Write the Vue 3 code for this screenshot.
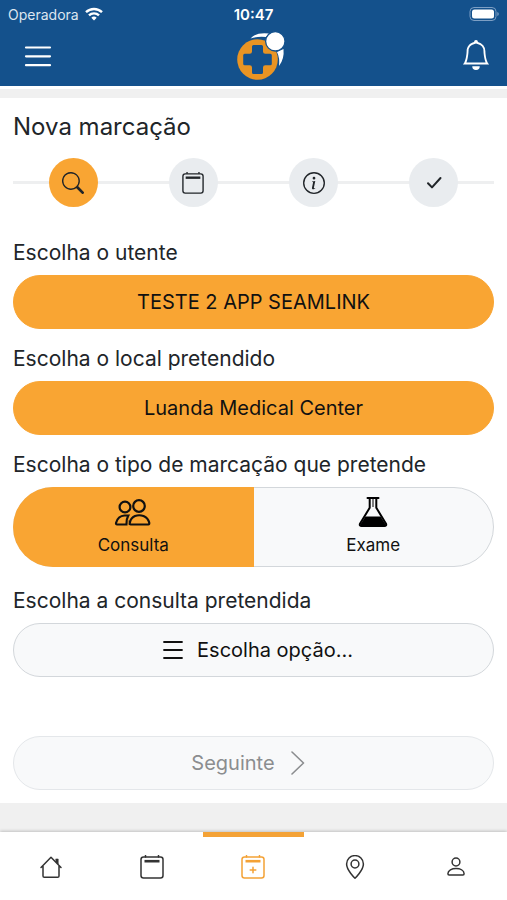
<script setup>
import { ref } from 'vue';

const steps = ['search', 'calendar', 'info', 'check'];
const currentStep = ref('search');

const tabs = [
  { name: 'home', label: 'Início' },
  { name: 'calendar', label: 'Agenda' },
  { name: 'calendar-plus', label: 'Nova marcação' },
  { name: 'pin', label: 'Locais' },
  { name: 'person', label: 'Perfil' }
];
const activeTab = ref('calendar-plus');

const tipo = ref('consulta');
</script>

<template>
  <div class="app">
    <header class="header">
      <div class="status">
        <span class="carrier">
          Operadora
          <svg width="18" height="14" viewBox="0 0 18 14" fill="none" stroke="#fff" stroke-width="2.4">
            <path d="M1 5.2a11.5 11.5 0 0 1 16 0" />
            <path d="M4 8.4a7.2 7.2 0 0 1 10 0" />
            <path d="M9 13.6l-2.7-2.8a3.9 3.9 0 0 1 5.4 0z" fill="#fff" stroke="none" />
          </svg>
        </span>
        <span class="time">10:47</span>
        <svg class="battery" width="30" height="14" viewBox="0 0 30 14">
          <rect x="1" y="0.5" width="26" height="13" rx="4" fill="none" stroke="#7d9fc4" />
          <rect x="3" y="2.5" width="22" height="9" rx="2.5" fill="#fff" />
          <path d="M28.3 5v4q1.5-.6 1.5-2t-1.5-2z" fill="#7d9fc4" />
        </svg>
      </div>
      <div class="toolbar">
        <button class="icon-button menu" aria-label="Menu">
          <svg width="28" height="24" viewBox="0 0 28 24" stroke="#fff" stroke-width="2.2" stroke-linecap="round">
            <path d="M2 2.5h24M2 11.3h24M2 20.2h24" />
          </svg>
        </button>
        <svg class="logo" width="66" height="52" viewBox="-14 0 66 52">
          <path d="M15.5 7.5Q21 1 34 2.5L31 6Q23 5 15.5 7.5z" fill="#fff" />
          <path d="M48.5 18Q49.5 28 44 35Q45 27 42 21z" fill="#fff" />
          <circle cx="22.5" cy="28.5" r="20.3" fill="#e99423" />
          <path d="M18.5 14h8q1.5 0 1.5 1.5v5q0 2.3 2.3 2.3h5q1.5 0 1.500 1.500v8.400q0 1.500-1.500 1.500h-5q-2.300 0-2.300 2.300v5q0 1.500-1.500 1.500h-8q-1.500 0-1.500-1.500v-5q0-2.300-2.300-2.300h-5q-1.500 0-1.500-1.500v-8.400q0-1.500 1.500-1.500h5q2.300 0 2.300-2.300v-5q0-1.500 1.500-1.500z" fill="#14518c" />
          <circle cx="40.3" cy="10.3" r="9.7" fill="#fff" stroke="#14518c" stroke-width="1.3" />
        </svg>
        <button class="icon-button bell" aria-label="Notificações">
          <svg width="30" height="30" viewBox="0 0 16 16" fill="#fff">
            <path d="M8 16a2 2 0 0 0 2-2H6a2 2 0 0 0 2 2zM8 1.918l-.797.161A4.002 4.002 0 0 0 4 6c0 .628-.134 2.197-.459 3.742-.16.767-.376 1.566-.663 2.258h10.244c-.287-.692-.502-1.49-.663-2.258C12.134 8.197 12 6.628 12 6a4.002 4.002 0 0 0-3.203-3.92L8 1.917zM14.22 12c.223.447.481.801.78 1H1c.299-.199.557-.553.78-1C2.68 10.2 3 6.88 3 6c0-2.42 1.72-4.44 4.005-4.901a1 1 0 1 1 1.99 0A5.002 5.002 0 0 1 13 6c0 .88.32 4.2 1.22 6z" />
          </svg>
        </button>
      </div>
    </header>

    <main class="card">
      <h1>Nova marcação</h1>

      <ol class="steps">
        <li v-for="step in steps" :key="step">
          <span class="step" :class="{ active: step === currentStep }">
            <svg v-if="step === 'search'" width="22" height="22" viewBox="0 0 16 16" fill="currentColor">
              <path d="M11.742 10.344a6.5 6.5 0 1 0-1.397 1.398h-.001c.03.04.062.078.098.115l3.85 3.85a1 1 0 0 0 1.415-1.414l-3.85-3.85a1.007 1.007 0 0 0-.115-.1zM12 6.5a5.5 5.5 0 1 1-11 0 5.5 5.5 0 0 1 11 0z" />
            </svg>
            <svg v-else-if="step === 'calendar'" width="22" height="22" viewBox="0 0 24 24" fill="none" stroke="currentColor" stroke-width="1.5">
              <rect x="1" y="2" width="22" height="21" rx="2.5" />
              <path d="M5.5 0v2M18.5 0v2" />
              <path d="M4 6.2h16" stroke-width="2.6" />
            </svg>
            <svg v-else-if="step === 'info'" width="22" height="22" viewBox="0 0 16 16" fill="currentColor">
              <path d="M8 15A7 7 0 1 1 8 1a7 7 0 0 1 0 14zm0 1A8 8 0 1 0 8 0a8 8 0 0 0 0 16z" />
              <path d="m8.93 6.588-2.29.287-.082.38.45.083c.294.07.352.176.288.469l-.738 3.468c-.194.897.105 1.319.808 1.319.545 0 1.178-.252 1.465-.598l.088-.416c-.2.176-.492.246-.686.246-.275 0-.375-.193-.304-.533L8.93 6.588zM9 4.5a1 1 0 1 1-2 0 1 1 0 0 1 2 0z" />
            </svg>
            <svg v-else width="22" height="22" viewBox="0 0 22 22" fill="none" stroke="currentColor" stroke-width="2" stroke-linecap="round" stroke-linejoin="round">
              <path d="M5 11.2l4 4.200L17.500 6" />
            </svg>
          </span>
        </li>
      </ol>

      <div class="field">
        <label class="label" for="utente">Escolha o utente</label>
        <button id="utente" class="pill selected">TESTE 2 APP SEAMLINK</button>
      </div>

      <div class="field">
        <label class="label" for="local">Escolha o local pretendido</label>
        <button id="local" class="pill selected">Luanda Medical Center</button>
      </div>

      <fieldset class="field">
        <legend class="label">Escolha o tipo de marcação que pretende</legend>
        <div class="options">
          <label class="option" :class="{ checked: tipo === 'consulta' }">
            <input type="radio" name="tipo" value="consulta" v-model="tipo">
            <svg width="38" height="30" viewBox="0 0 38 30" fill="none" stroke="currentColor" stroke-width="2.2">
              <circle cx="11" cy="10" r="5.4" />
              <circle cx="25" cy="9" r="5.8" />
              <path d="M15.8 27.5q-.3-.8.1-2 .8-4.500 5.100-6.500 4.200-1.500 8.500 0 4.600 2 5.700 6.500.400 2-1 2H16.800q-.700 0-1-.500z" />
              <path d="M13.5 27.5H3.2q-1.600 0-1.100-1.800Q4 19 10.500 18.500h3.800q-2 3.500-1.800 8.500" />
            </svg>
            <span>Consulta</span>
          </label>
          <label class="option" :class="{ checked: tipo === 'exame' }">
            <input type="radio" name="tipo" value="exame" v-model="tipo">
            <svg width="30" height="30" viewBox="0 0 30 30">
              <path d="M11.7 1v9.8L1.9 27q-.6 2 1.6 2h23q2.200 0 1.600-2L18.300 10.800V1M9.500 1h11" fill="none" stroke="#000" stroke-width="2" stroke-linecap="round" />
              <path d="M7.5 19.5h15L28 28H2z" fill="#000" />
              <path d="M15 1v9" stroke="#000" stroke-width="1" />
            </svg>
            <span>Exame</span>
          </label>
        </div>
      </fieldset>

      <div class="field last">
        <label class="label" for="consulta">Escolha a consulta pretendida</label>
        <button id="consulta" class="pill">
          <svg width="30" height="20" viewBox="0 0 30 20" stroke="currentColor" stroke-width="1.8" stroke-linecap="round">
            <path d="M10 2h18M10 10h18M10 18h18" />
          </svg>
          Escolha opção...
        </button>
      </div>

      <button class="pill next" disabled>
        Seguinte
        <svg width="28" height="26" viewBox="0 0 28 26" fill="none" stroke="currentColor" stroke-width="1.6" stroke-linecap="round" stroke-linejoin="round">
          <path d="M4 2l11.500 11L4 24" />
        </svg>
      </button>
    </main>

    <nav class="tabs">
      <button
        v-for="tab in tabs"
        :key="tab.name"
        class="tab"
        :class="{ active: tab.name === activeTab }"
        :aria-label="tab.label"
        @click="activeTab = tab.name"
      >
        <svg width="24" height="24" viewBox="0 0 24 24" fill="none" stroke="currentColor" stroke-width="1.5" stroke-linecap="round" stroke-linejoin="round">
          <template v-if="tab.name === 'home'">
            <path d="M2 12.5L12 2.2l10 10.300M4 11v10q0 1.300 1.300 1.300h13.400q1.300 0 1.300-1.300V11" />
            <path d="M17 4h2.200v5L17 6.800z" fill="currentColor" stroke-width="0.6" />
          </template>
          <template v-else-if="tab.name === 'pin'">
            <path d="M12 23.2S3.600 15.300 3.600 9a8.400 8.400 0 0 1 16.800 0C20.400 15.300 12 23.200 12 23.200z" />
            <circle cx="12" cy="9" r="3.9" />
          </template>
          <template v-else-if="tab.name === 'person'">
            <circle cx="12" cy="7" r="3.9" />
            <path d="M3.900 18.800c0-3.600 4-5.300 8.100-5.300s8.100 1.700 8.100 5.300q0 1.200-1.200 1.200H5.100q-1.200 0-1.200-1.200z" />
          </template>
          <template v-else>
            <rect x="1" y="2" width="22" height="21" rx="2.5" />
            <path d="M5.500 .500V2M18.500 .500V2" />
            <path d="M4.500 6.200h15" stroke-width="2.6" stroke-linecap="butt" />
            <path v-if="tab.name === 'calendar-plus'" d="M12 12.200v5.600M9.200 15h5.600" />
          </template>
        </svg>
      </button>
    </nav>
  </div>
</template>

<style>
body {
  background-color: #f0f0f0;
}
</style>

<style scoped>
.app {
  display: flex;
  flex-direction: column;
  min-height: 100vh;
  font-family: Inter, "Liberation Sans", sans-serif;
  color: #212529;
}

button {
  font-family: inherit;
  border: none;
  padding: 0;
  cursor: pointer;
}

svg {
  display: block;
  flex-shrink: 0;
}

.header {
  background-color: #14518c;
  color: white;
  border-bottom: 3px solid white;
}

.status {
  display: grid;
  grid-template-columns: 1fr auto 1fr;
  align-items: center;
  height: 28px;
  padding: 0 8px;
  font-size: 14px;
}

.carrier {
  display: flex;
  align-items: center;
  gap: 6px;
  color: #dce6f0;
}

.time {
  font-size: 15px;
  font-weight: 600;
}

.battery {
  justify-self: end;
}

.toolbar {
  display: grid;
  grid-template-columns: 1fr auto 1fr;
  align-items: center;
  height: 58px;
  padding: 0 16px;
}

.icon-button {
  background: none;
}

.menu {
  justify-self: start;
  margin-left: 8px;
}

.bell {
  justify-self: end;
  padding-bottom: 4px;
}

.card {
  margin-top: 9px;
  padding: 13px;
  background-color: white;
}

h1 {
  margin: 0 0 15px;
  font-size: 24px;
  font-weight: 400;
  line-height: 32px;
}

.steps {
  display: grid;
  grid-template-columns: repeat(4, 1fr);
  margin: 0 0 29px;
  padding: 0;
  list-style: none;
  background: linear-gradient(#eeeff0, #eeeff0) center / 100% 3px no-repeat;
}

.steps li {
  display: flex;
  justify-content: center;
}

.step {
  display: flex;
  align-items: center;
  justify-content: center;
  width: 49px;
  height: 49px;
  border-radius: 50%;
  background-color: #e9ecef;
}

.step.active {
  background-color: #f9a533;
}

.field {
  margin: 0 0 13px;
  padding: 0;
  border: none;
  min-width: 0;
}

fieldset.field {
  margin-bottom: 17px;
}

.field.last {
  margin-bottom: 59px;
}

.label {
  display: block;
  margin-bottom: 5px;
  padding: 0;
  font-size: 21px;
  line-height: 34px;
}

.pill {
  display: flex;
  align-items: center;
  justify-content: center;
  gap: 13px;
  box-sizing: border-box;
  width: 100%;
  height: 54px;
  border: 1px solid #d3d7db;
  border-radius: 27px;
  background-color: #f8f9fa;
  color: #111;
  font-size: 20px;
}

.selected {
  border-color: #f9a533;
  background-color: #f9a533;
}

.next {
  border-color: #e4e7ea;
  color: #8b8d8f;
  cursor: default;
}

.options {
  display: grid;
  grid-template-columns: 1fr 1fr;
  box-sizing: border-box;
  height: 80px;
  border: 1px solid #d3d7db;
  border-radius: 40px;
  background-color: #f8f9fa;
}

.option {
  display: flex;
  flex-direction: column;
  align-items: center;
  gap: 6px;
  margin: -1px;
  padding-top: 10px;
  color: #111;
  font-size: 17px;
  line-height: 24px;
  cursor: pointer;
}

.option:first-child {
  margin-right: 0;
  border-radius: 40px 0 0 40px;
}

.option:last-child {
  border-radius: 0 40px 40px 0;
}

.option.checked {
  background-color: #f9a533;
}

.option input {
  position: absolute;
  appearance: none;
  margin: 0;
}

.tabs {
  display: grid;
  grid-template-columns: repeat(5, 1fr);
  height: 68px;
  margin-top: auto;
  background-color: white;
  box-shadow: 0 -1px 3px rgba(0, 0, 0, 0.2);
}

.tab {
  display: flex;
  align-items: center;
  justify-content: center;
  background: none;
  border-top: 5px solid transparent;
  border-bottom: 3px solid transparent;
  color: #333;
}

.tab.active {
  border-top-color: #f4a236;
  color: #f4a236;
}
</style>
